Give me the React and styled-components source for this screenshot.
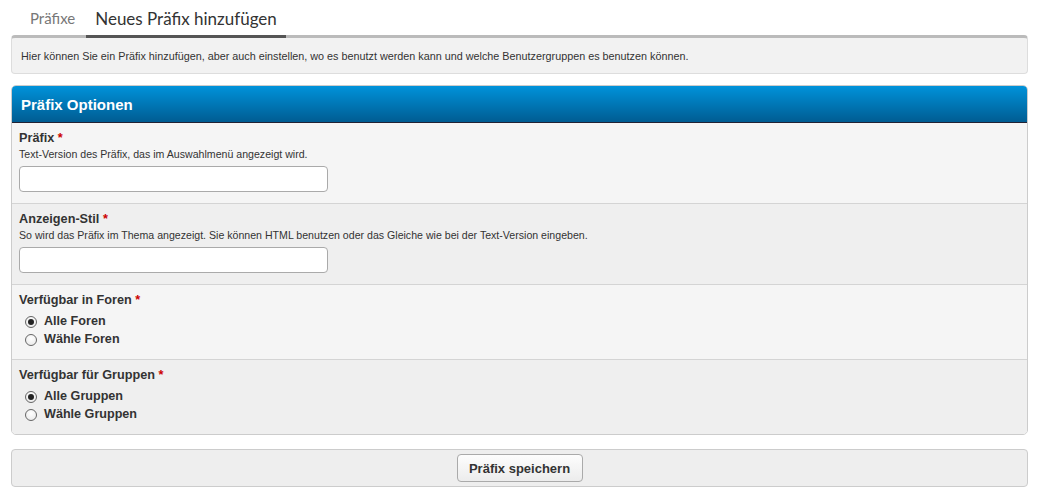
import styled, { createGlobalStyle } from "styled-components"

const GlobalStyle = createGlobalStyle`
  html, body {
    margin: 0;
    padding: 0;
    background: #fff;
  }
  body {
    font-family: "Liberation Sans", Arial, sans-serif;
    color: #333;
  }
`

const Page = styled.div`
  padding: 4px 15px 0 11px;
  width: 1017px;
`

const Tabs = styled.div`
  display: flex;
  padding-left: 8px;
  height: 31px;
`

const Tab = styled.div`
  font-family: Lato, "Open Sans", sans-serif;
  font-size: ${(p) => (p.active ? "17px" : "15px")};
  color: ${(p) => (p.active ? "#333" : "#777")};
  padding: ${(p) => (p.active ? "4px 9px 0" : "5px 11px 0")};
  box-sizing: border-box;
  position: relative;
  z-index: 1;
  border-bottom: 3px solid ${(p) => (p.active ? "#555" : "transparent")};
  height: 34px;
`

const Intro = styled.div`
  background: #f2f2f2;
  border: 1px solid #ddd;
  border-top: 3px solid #bbb;
  border-radius: 4px;
  padding: 12px 9px 11px;
  font-size: 10.8px;
  margin-bottom: 11px;
`

const Panel = styled.div`
  border: 1px solid #ccc;
  border-radius: 5px;
  overflow: hidden;
`

const PanelHead = styled.div`
  background: linear-gradient(#0092da, #005c92);
  border-bottom: 1px solid #223;
  color: #fff;
  font-weight: bold;
  font-size: 15px;
  padding: 10px 9px 9px;
`

const Row = styled.div`
  background: ${(p) => (p.alt ? "#efefef" : "#f5f5f5")};
  border-top: ${(p) => (p.first ? "none" : "1px solid #d4d4d4")};
  padding: 8px 7px 11px;
`

const Label = styled.div`
  font-weight: bold;
  font-size: 12.7px;
  color: #333;
  span {
    color: #c00;
  }
`

const Hint = styled.div`
  font-size: 10.6px;
  color: #333;
  margin-top: 3px;
`

const TextInput = styled.input`
  display: block;
  width: 309px;
  height: 26px;
  box-sizing: border-box;
  border: 1px solid #aaa;
  border-radius: 4px;
  background: #fff;
  margin-top: 6px;
`

const Options = styled.div`
  margin-top: 5px;
  display: flex;
  flex-direction: column;
`

const Option = styled.label`
  display: flex;
  align-items: center;
  height: 18px;
  font-weight: bold;
  font-size: 12.6px;
  color: #333;
`

const RadioDot = styled.input`
  appearance: none;
  margin: 2px 7px 0 6px;
  width: 12px;
  height: 12px;
  border-radius: 50%;
  border: 1px solid #666;
  background: radial-gradient(circle at 50% 35%, #fff, #e6e6e6);
  display: grid;
  place-items: center;
  &:checked::after {
    content: "";
    width: 6px;
    height: 6px;
    border-radius: 50%;
    background: #222;
  }
`

const Footer = styled.div`
  margin-top: 14px;
  background: #eee;
  border: 1px solid #ccc;
  border-radius: 4px;
  padding: 4px 0;
  display: flex;
  justify-content: center;
`

const SaveButton = styled.button`
  font-family: "Liberation Sans", Arial, sans-serif;
  font-weight: bold;
  font-size: 13px;
  color: #333;
  background: linear-gradient(#fdfdfd, #ececec);
  border: 1px solid #aaa;
  border-radius: 4px;
  padding: 0 10px;
  height: 28px;
  width: 126px;
`

const Radio = ({ label, checked, name }) => (
  <Option>
    <RadioDot type="radio" name={name} defaultChecked={checked} />
    {label}
  </Option>
)

export default function App() {
  return (
    <>
      <GlobalStyle />
      <Page>
        <Tabs>
          <Tab>Präfixe</Tab>
          <Tab active>Neues Präfix hinzufügen</Tab>
        </Tabs>
        <Intro>
          Hier können Sie ein Präfix hinzufügen, aber auch einstellen, wo es benutzt werden kann und welche
          Benutzergruppen es benutzen können.
        </Intro>
        <Panel>
          <PanelHead>Präfix Optionen</PanelHead>
          <Row first>
            <Label>
              Präfix <span>*</span>
            </Label>
            <Hint>Text-Version des Präfix, das im Auswahlmenü angezeigt wird.</Hint>
            <TextInput />
          </Row>
          <Row alt>
            <Label>
              Anzeigen-Stil <span>*</span>
            </Label>
            <Hint>
              So wird das Präfix im Thema angezeigt. Sie können HTML benutzen oder das Gleiche wie bei der
              Text-Version eingeben.
            </Hint>
            <TextInput />
          </Row>
          <Row>
            <Label>
              Verfügbar in Foren <span>*</span>
            </Label>
            <Options>
              <Radio name="foren" label="Alle Foren" checked />
              <Radio name="foren" label="Wähle Foren" />
            </Options>
          </Row>
          <Row alt>
            <Label>
              Verfügbar für Gruppen <span>*</span>
            </Label>
            <Options>
              <Radio name="gruppen" label="Alle Gruppen" checked />
              <Radio name="gruppen" label="Wähle Gruppen" />
            </Options>
          </Row>
        </Panel>
        <Footer>
          <SaveButton>Präfix speichern</SaveButton>
        </Footer>
      </Page>
    </>
  )
}
